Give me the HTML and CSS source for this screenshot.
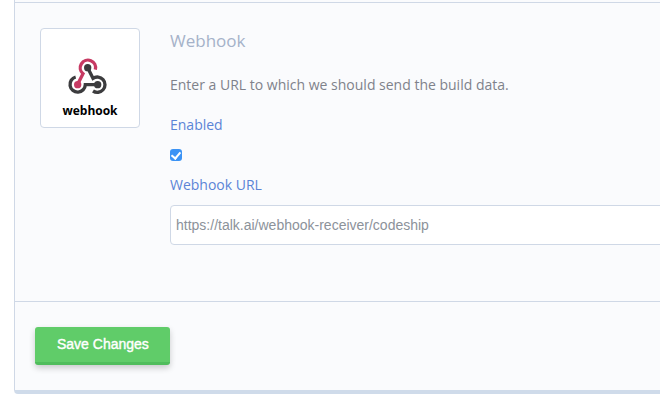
FILE: index.html
```html
<!DOCTYPE html>
<html lang="en">
<head>
<meta charset="utf-8">
<title>Webhook settings</title>
<link rel="stylesheet" href="styles.css">
</head>
<body>
<form class="panel">
  <section class="integration">
    <div class="badge">
      <svg class="badge-icon" viewBox="201 171 138 114" aria-hidden="true">
        <g fill="none" stroke-width="10">
          <path stroke="#c73a63" d="M286 209A23 23 0 1 0 249 221L233 253"/>
          <path stroke="#3c3c3e" d="M263 203L279 235A23 23 0 1 1 279 273"/>
          <path stroke="#3c3c3e" d="M227 231A23 23 0 1 0 256 254H292"/>
        </g>
        <circle cx="263" cy="203" r="11" fill="#3c3c3e"/>
        <circle cx="233" cy="254" r="11" fill="#c73a63"/>
        <circle cx="293" cy="254" r="11" fill="#3c3c3e"/>
      </svg>
      <span class="badge-name">webhook</span>
    </div>
    <div class="fields">
      <h2 class="title">Webhook</h2>
      <p class="description">Enter a URL to which we should send the build data.</p>
      <label class="label" for="enabled">Enabled</label>
      <input class="checkbox" type="checkbox" id="enabled" checked>
      <label class="label" for="url">Webhook URL</label>
      <input class="text-input" type="text" id="url" value="https://talk.ai/webhook-receiver/codeship">
    </div>
  </section>
  <footer class="actions">
    <button class="save" type="button">Save Changes</button>
  </footer>
</form>
</body>
</html>
```
FILE: styles.css
```css
* {
  box-sizing: border-box;
}

body {
  margin: 0;
  background: #fff;
  font: 14px/20px "Open Sans", sans-serif;
  color: #7f828b;
  overflow-x: hidden;
}

.panel {
  margin-left: 14px;
  padding-top: 2px;
  background: #fafbfd;
  border-left: 1px solid #cfd8e6;
  border-bottom: 4px solid #cfdbea;
  border-bottom-left-radius: 4px;
}

.integration {
  display: flex;
  align-items: flex-start;
  gap: 30px;
  padding: 25px 0 56px 25px;
  border-top: 1px solid #cfd8e6;
}

.badge {
  flex: none;
  display: flex;
  flex-direction: column;
  align-items: center;
  justify-content: flex-end;
  gap: 6px;
  width: 100px;
  height: 100px;
  padding-bottom: 6px;
  background: #fff;
  border: 1px solid #cfd8e6;
  border-radius: 4px;
}

.badge-icon {
  width: 46px;
  height: 38px;
}

.badge-name {
  font-size: 12px;
  font-weight: 700;
  color: #000;
}

.fields {
  flex: 1;
  display: flex;
  flex-direction: column;
  align-items: flex-start;
  margin-right: -20px;
}

.title {
  margin: 0 0 22px;
  font-size: 17px;
  line-height: 25px;
  font-weight: 400;
  color: #a5b2c9;
}

.description {
  margin: 0 0 20px;
}

.label {
  color: #5b84d6;
}

.checkbox {
  appearance: none;
  display: grid;
  place-items: center;
  width: 12px;
  height: 12px;
  margin: 14px 0;
  background: #3b93f5;
  border-radius: 3px;
}

.checkbox:checked::after {
  content: "";
  width: 4px;
  height: 7px;
  margin-bottom: 2px;
  border: solid #fff;
  border-width: 0 2px 2px 0;
  transform: rotate(40deg);
}

.text-input {
  width: 100%;
  height: 40px;
  margin-top: 10px;
  padding: 0 5px;
  background: #fff;
  border: 1px solid #cfd8e6;
  border-radius: 4px;
  font: 14px "Liberation Sans", sans-serif;
  color: #8c929a;
}

.actions {
  padding: 25px 20px;
  border-top: 1px solid #cfd8e6;
}

.save {
  display: block;
  height: 38px;
  padding: 0 21px 1px 22px;
  background: #60cc69;
  border: 0;
  border-bottom: 3px solid #50bd5c;
  border-radius: 3px;
  box-shadow: 0 3px 6px rgba(0, 0, 0, 0.2);
  font: 14px "Liberation Sans", sans-serif;
  color: #fff;
  -webkit-text-stroke: 0.4px #fff;
}
```
